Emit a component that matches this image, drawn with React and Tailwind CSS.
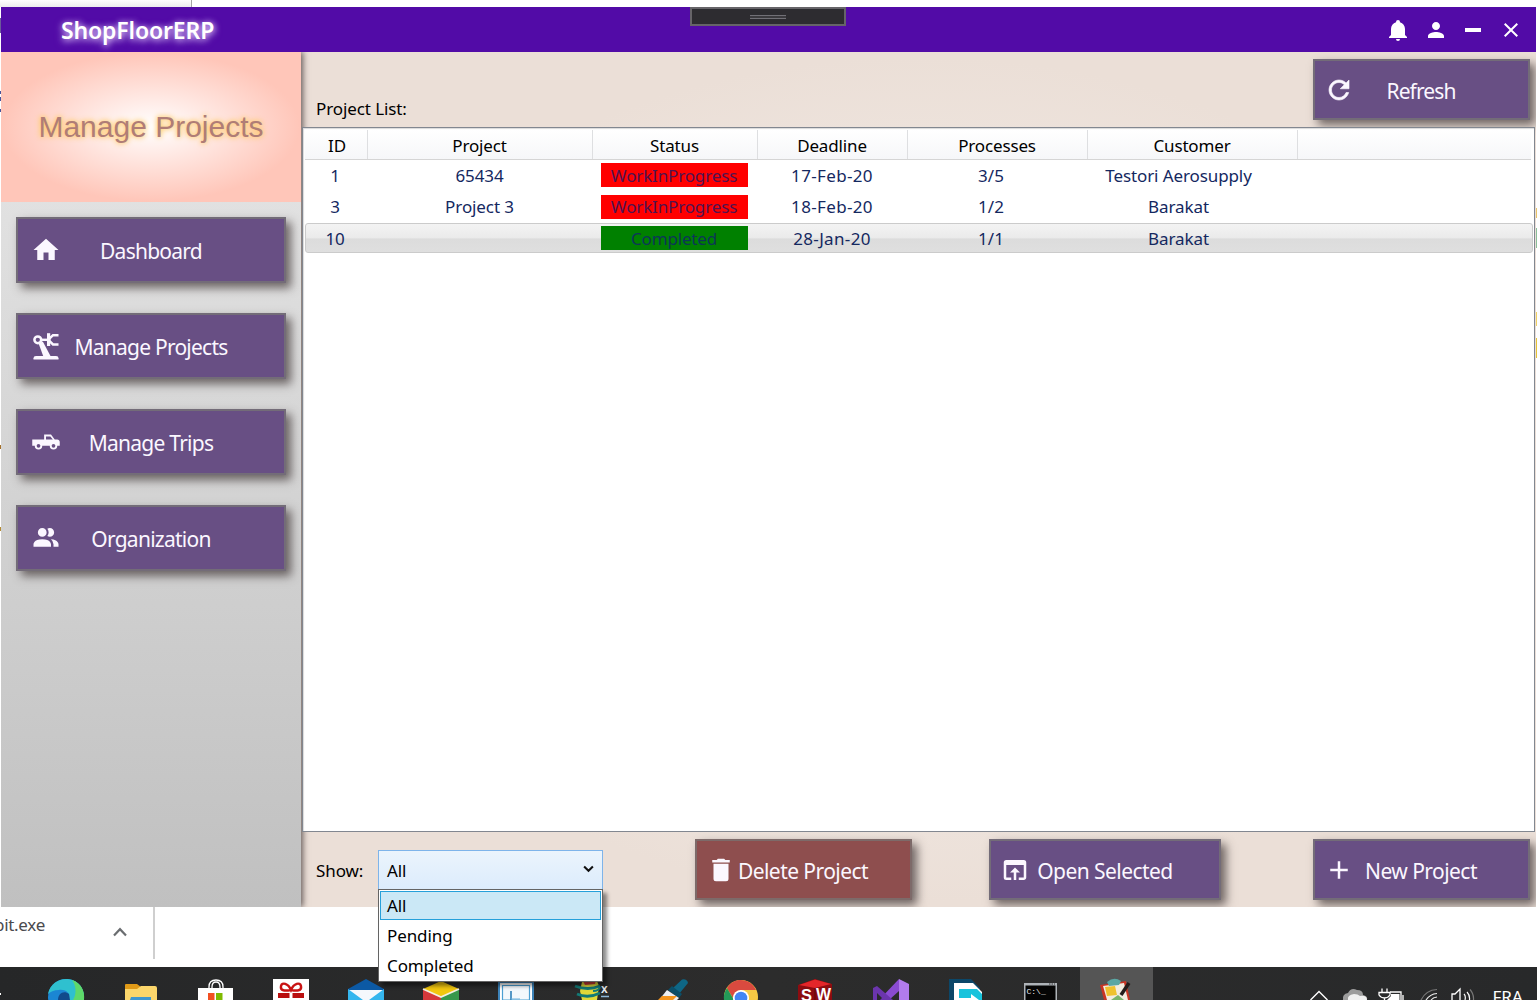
import React from "react";
import { MdPerson, MdClose, MdHome, MdOpenInBrowser, MdAdd } from "react-icons/md";

const UI = "font-['Noto_Sans',sans-serif]";

function Mdi({ d, className }) {
  return (
    <svg viewBox="0 0 24 24" className={className} fill="currentColor" fillRule="evenodd">
      <path d={d} />
    </svg>
  );
}

const BELL =
  "M21,19V20H3V19L5,17V11C5,7.9 7.03,5.17 10,4.29C10,4.19 10,4.1 10,4A2,2 0 0,1 12,2A2,2 0 0,1 14,4C14,4.1 14,4.19 14,4.29C16.97,5.17 19,7.9 19,11V17L21,19M14,21A2,2 0 0,1 12,23A2,2 0 0,1 10,21";
const PICKUP =
  "M16,6H10.5V10H1V15H3A3,3 0 0,0 6,18A3,3 0 0,0 9,15H15A3,3 0 0,0 18,18A3,3 0 0,0 21,15H23V12C23,10.89 22.11,10 21,10H19L16,6M12,7.5H15.5L17.46,10H12V7.5M6,13.5A1.5,1.5 0 0,1 7.5,15A1.5,1.5 0 0,1 6,16.5A1.5,1.5 0 0,1 4.5,15A1.5,1.5 0 0,1 6,13.5M18,13.5A1.5,1.5 0 0,1 19.5,15A1.5,1.5 0 0,1 18,16.5A1.5,1.5 0 0,1 16.5,15A1.5,1.5 0 0,1 18,13.5Z";
const PEOPLE =
  "M16,17V19H2V17S2,13 9,13 16,17 16,17M12.5,7.5A3.5,3.5 0 1,0 9,11A3.5,3.5 0 0,0 12.5,7.5M15.94,13A5.32,5.32 0 0,1 18,17V19H22V17S22,13.37 15.94,13M15,4A3.39,3.39 0 0,0 13.07,4.59A5,5 0 0,1 13.07,10.41A3.39,3.39 0 0,0 15,11A3.5,3.5 0 0,0 15,4Z";
const TRASH =
  "M19,4H15.5L14.5,3H9.5L8.5,4H5V6H19M6,19A2,2 0 0,0 8,21H16A2,2 0 0,0 18,19V7H6V19Z";

function RefreshIcon() {
  return (
    <svg viewBox="0 0 24 24" className="size-[30px]" fill="currentColor" stroke="currentColor" strokeWidth="0.5">
      <path d="M17.65 6.35C16.2 4.9 14.21 4 12 4c-4.42 0-7.99 3.58-7.99 8s3.57 8 7.99 8c3.73 0 6.84-2.55 7.73-6h-2.08c-.82 2.33-3.04 4-5.65 4-3.31 0-6-2.69-6-6s2.69-6 6-6c1.66 0 3.14.69 4.220 1.780L13 11h7V4l-2.350 2.350z" />
    </svg>
  );
}

function RobotArm() {
  return (
    <svg viewBox="0 0 30 30" className="mb-[3px] size-[30px]" fill="none" stroke="currentColor">
      <circle cx="6.800" cy="9.800" r="3.400" strokeWidth="2.500" />
      <path d="M9.500 9.800H17" strokeWidth="2.400" />
      <path d="M7.500 13.200L11.800 11.500L19.500 26H12.200Z" fill="currentColor" stroke="none" />
      <path d="M2.500 29.600V28.200Q2.500 26 5 26H25Q27.500 26 27.500 28.200V29.600Z" fill="currentColor" stroke="none" />
      <path d="M27.500 5.200H22L18.400 8.600V11L22 14.400H27.500" strokeWidth="2.500" />
      <path d="M17.600 3.200V16" strokeWidth="3.200" />
    </svg>
  );
}

function Button({ icon, label, className, iconClass, labelClass }) {
  return (
    <button
      className={`flex items-center border-2 text-left text-[21px] text-[#fbf7ff] shadow-[5px_5px_9px_0px_rgba(70,60,60,0.75)] ${className}`}
    >
      <span className={`flex shrink-0 justify-center ${iconClass}`}>{icon}</span>
      <span className={`whitespace-nowrap ${labelClass}`}>{label}</span>
    </button>
  );
}

const PURPLE = "bg-[#684f84] border-[#736c78]";

const nav = [
  { label: "Dashboard", icon: <MdHome className="size-[30px]" /> },
  { label: "Manage Projects", icon: <RobotArm /> },
  { label: "Manage Trips", icon: <Mdi d={PICKUP} className="size-[30px]" /> },
  { label: "Organization", icon: <Mdi d={PEOPLE} className="size-[30px]" /> },
];

const rows = [
  ["1", "65434", "WorkInProgress", "17-Feb-20", "3/5", "Testori Aerosupply"],
  ["3", "Project 3", "WorkInProgress", "18-Feb-20", "1/2", "Barakat"],
  ["10", "", "Completed", "28-Jan-20", "1/1", "Barakat"],
];

const ROW_STYLE = [
  "h-[30px] border border-transparent",
  "h-[33px] border border-transparent",
  "h-[30px] rounded-[3px] border border-[#cbcbcb] bg-[linear-gradient(#f3f3f3,#ebebeb_48%,#dcdcdc_54%,#dfdfdf)]",
];

function ProjectTable() {
  return (
    <div className="h-[705px] w-[1233px] border border-[#828790] bg-white pl-[2px] pt-[2px] shadow-[inset_1px_1px_1px_rgba(0,0,0,0.15)]">
      <div className="mr-[3px] grid h-[30px] grid-cols-[63px_225px_165px_150px_180px_210px_1fr] border-b border-[#d5d5d5] bg-linear-to-b from-white to-[#f6f7f9] text-[17px] tracking-[-0.15px] text-black">
        {["ID", "Project", "Status", "Deadline", "Processes", "Customer"].map((h, i) => (
          <div
            key={h}
            className={`flex items-center justify-center border-r border-[#dedfe1] pt-[2px] ${i === 0 ? "pl-[2px]" : "pr-px"}`}
          >
            {h}
          </div>
        ))}
      </div>
      <div className="text-[17px] tracking-[-0.1px] text-[#14285f]">
        {rows.map((r, i) => (
          <div
            key={i}
            className={`mr-[1px] grid grid-cols-[61px_225px_165px_150px_180px_210px_1fr] items-center ${ROW_STYLE[i]}`}
          >
            <div className="pr-[3px] pt-px text-center">{r[0]}</div>
            <div className="pt-px text-center">{r[1]}</div>
            <div className="flex justify-center pr-px">
              <span
                className={`flex h-6 w-[147px] items-center justify-center pt-px tracking-[-0.15px] ${
                  r[2] === "Completed" ? "bg-[#008000] text-[#0d3558]" : "bg-[#ff0000] text-[#501450]"
                }`}
              >
                {r[2]}
              </span>
            </div>
            <div className="pt-px text-center tracking-[0.35px]">{r[3]}</div>
            <div className="pr-[12px] pt-px text-center tracking-normal">{r[4]}</div>
            <div className="pr-[27px] pt-px text-center">{r[5]}</div>
          </div>
        ))}
      </div>
    </div>
  );
}

function Combo() {
  return (
    <div className="relative ml-[15px] h-[40px] w-[225px] text-[17px] tracking-[-0.1px] text-black">
      <div className="flex h-full items-center justify-between border border-[#7eb4ea] bg-linear-to-b from-[#ebf4fc] to-[#dcecfc] pl-2 pr-2">
        <span className="pt-px">All</span>
        <svg viewBox="0 0 12 8" className="mb-[2px] h-[8px] w-[11px]" fill="none" stroke="#111" strokeWidth="2.200">
          <path d="M1.200 1.200L6 6L10.800 1.200" />
        </svg>
      </div>
      <div className="absolute left-0 top-[39px] z-10 h-[93px] w-[225px] border border-[#646464] bg-white pt-px shadow-[4px_4px_4px_rgba(0,0,0,0.45)]">
        <div className="mx-px flex h-[29px] items-center border border-[#26a0da] bg-[#cbe8f6] pl-[6px]">All</div>
        <div className="mt-px flex h-[30px] items-center pl-2">Pending</div>
        <div className="flex h-[30px] items-center pl-2">Completed</div>
      </div>
    </div>
  );
}

const taskIcons = [
  <g key="edge">
    <circle cx="38" cy="30" r="18" fill="#1b86d3" />
    <path d="M20 27C22 16 32 11 40 12C51 13 57 22 56 33H40C44 27 38 22 31 23C26 23 22 25 20 27Z" fill="#2fc0cf" />
    <path d="M44 13C53 16 57 24 56 33H45C49 27 48 18 44 13Z" fill="#5fd96a" />
    <path d="M30 33C30 26 36 23 41 27L42 33Z" fill="#114a8b" />
  </g>,
  <g key="folder">
    <path d="M22 18Q22 17 23 17H34L38 20H53V33H22Z" fill="#e09a17" />
    <path d="M22 22H34L38 19H52Q54 19 54 21V33H22Z" fill="#fbd66b" />
    <path d="M28 30H48V33H27Z" fill="#3f97d0" />
  </g>,
  <g key="store">
    <path d="M31 22V20Q31 13 38 13Q45 13 45 20V22M34 22V20Q34 15 38 15Q42 15 42 20V22" fill="none" stroke="#fff" strokeWidth="1.300" />
    <path d="M20 21H55V33H20Z" fill="#fff" />
    <path d="M30 26H36.500V33H30Z" fill="#f25022" />
    <path d="M38 26H44.500V33H38Z" fill="#7fba00" />
  </g>,
  <g key="gift">
    <path d="M20 12H56V33H20Z" fill="#fff" />
    <path d="M38 23C32 24 27 24 28 19C29 15 35 16 38 23C41 16 47 15 48 19C49 24 44 24 38 23Z" fill="none" stroke="#c81414" strokeWidth="2.400" />
    <path d="M25 26H36.500V31H25ZM39.500 26H51V31H39.500Z" fill="#b90f0f" />
  </g>,
  <g key="mail">
    <path d="M20 22L38 12L56 22V33H20Z" fill="#0c59a4" />
    <path d="M20 23H56L38 38Z" fill="#f5f8fc" />
    <path d="M20 22L35 33H20ZM56 22L41 33H56Z" fill="#35b6ee" />
  </g>,
  <g key="cube">
    <path d="M20 22L38 14L56 22L38 30Z" fill="#f2c70f" />
    <path d="M20 22L38 30V33H20Z" fill="#d5383b" />
    <path d="M56 22L38 30V33H56Z" fill="#38984c" />
    <path d="M20 22L38 30L56 22" fill="none" stroke="#f3f0e4" strokeWidth="1.800" />
  </g>,
  <g key="ledger">
    <path d="M20 14H56V33H20Z" fill="#3d83b9" />
    <path d="M22 16H54V33H22Z" fill="#fff" />
    <path d="M24.500 18.500H51.500V33H24.500Z" fill="#f3f8fc" stroke="#4b9fd2" strokeWidth="1.200" />
    <path d="M33 24V33" fill="none" stroke="#2278b5" strokeWidth="1.500" />
    <path d="M33 32H42" fill="none" stroke="#6fb2dc" strokeWidth="1" />
  </g>,
  <g key="spring">
    <path d="M29 15L44 14L46 19L44 33H29L27 24Z" fill="#e1d838" />
    <path d="M30 14L43 13L42 17L32 18Z" fill="#c93b37" />
    <path d="M22 19Q35 24 47 19M24 27Q35 32 47 26" fill="none" stroke="#127a76" strokeWidth="2.800" />
    <path d="M47 20Q46 24 40 24" fill="none" stroke="#127a76" strokeWidth="2" />
  </g>,
  <g key="dropper">
    <path d="M45 21L54 12.500Q59 11.500 60 16L51 27Z" fill="#0e6685" />
    <path d="M44 19L54 27L51 31L40 23Z" fill="#0b4e68" />
    <path d="M39 23L51 31L49 33H31Z" fill="#eceff2" />
    <path d="M34 29H49L45 33H30Z" fill="#f4951e" />
  </g>,
  <g key="chrome">
    <circle cx="38" cy="30" r="17" fill="#f7c844" />
    <path d="M24 21C31 9 48 11 53 23H38Q31 24 30 31Z" fill="#d94a3f" />
    <path d="M24 21L31 33H21Q20 27 24 21Z" fill="#239a58" />
    <circle cx="38" cy="31" r="8" fill="#fff" />
    <circle cx="38" cy="31" r="6.300" fill="#4285f4" />
  </g>,
  <g key="sw">
    <path d="M20 18L37 12L54 17V33H20Z" fill="#8c0c10" />
    <path d="M21 18L37 12.500L53 17L37 21Z" fill="#e4262a" />
    <path d="M37 21V33" stroke="#5b0809" strokeWidth="1" />
    <text x="23" y="34" fontSize="17" fontWeight="bold" fill="#fff" fontFamily="Liberation Sans" textLength="11" lengthAdjust="spacingAndGlyphs">S</text>
    <text x="38" y="33" fontSize="17" fontWeight="bold" fill="#fff" fontFamily="Liberation Sans" textLength="15" lengthAdjust="spacingAndGlyphs">W</text>
  </g>,
  <g key="vs">
    <path d="M46 12L56 17V33H46Z" fill="#b27bec" />
    <path d="M46 12V24L36 33H26Z" fill="#8a4bd2" />
    <path d="M20 21L24 19L40 33H20Z" fill="#6b35ad" />
    <path d="M24 26L29 31L27 33H24Z" fill="#2a2a2c" />
  </g>,
  <g key="dee">
    <path d="M21 12H43L52 21V33H21Z" fill="#0b4769" />
    <path d="M26 16H45L54 25V33H26Z" fill="#fff" />
    <path d="M31 22H49L54 27V33H51L43 27V31H31Z" fill="#19c3dc" />
  </g>,
  <g key="cmd">
    <path d="M21 16H54V33H21Z" fill="#aeb3b8" />
    <path d="M22.500 18.500H52.500V33H22.500Z" fill="#050505" />
    <path d="M46 17H52" stroke="#333" strokeWidth="1" strokeDasharray="1.500 1" />
    <text x="23.500" y="27" fontSize="8" fill="#eee" fontFamily="Liberation Mono">C:\_</text>
  </g>,
  <g key="clip">
    <path d="M2 0H75V33H2Z" fill="#555555" />
    <path d="M22 18L48 14L52 33H26Z" fill="#c93423" />
    <path d="M25 19L46 16L50 33H29Z" fill="#f3ece0" />
    <path d="M27 20L37 19L39 28L29 29Z" fill="#f0c22e" />
    <path d="M29 15Q36 9 43 14L41 18L31 19Z" fill="#5ba7a4" />
    <path d="M51 16L43 28" stroke="#241c1a" strokeWidth="3.500" />
    <path d="M33 33L40 28L46 33Z" fill="#7ab46c" />
  </g>,
];

function Taskbar() {
  return (
    <div className="relative z-[15] flex h-[33px] items-stretch overflow-hidden bg-linear-to-r from-[#262728] via-[#2c2c2c] to-[#28292a]">
      <div className="w-[28px] shrink-0 pt-[26px]">
        <div className="h-[2px] w-px bg-white" />
      </div>
      {taskIcons.map((g, i) => (
        <svg key={i} viewBox="0 0 75 33" className="h-[33px] w-[75px] shrink-0">
          {g}
          {i === 7 && (
            <text x="48" y="26" fontSize="12" fontWeight="bold" fill="#e8edf2" fontFamily="Liberation Sans">
              x
            </text>
          )}
          {i === 7 && <path d="M48 29.500H56" stroke="#8fb7d8" strokeWidth="1.500" />}
        </svg>
      ))}
      <svg viewBox="0 0 237 33" className="ml-auto h-[33px] w-[237px] shrink-0" fill="none">
        <path d="M10.500 33L19 24.500L27.500 33" stroke="#fff" strokeWidth="1.400" />
        <path d="M43 33Q42 27 48 26Q51 20 57 23Q63 23 63 28Q68 29 67 33Z" fill="#9c9c9c" />
        <path d="M48 33Q47 28 54 27Q58 27 60 29Q67 28 67 33Z" fill="#f0f0f0" />
        <path d="M82 21.500V25M87 21.500V25M79 25.500H90V28Q88 31 84.500 31Q81 31 79 28ZM84.500 31V33" stroke="#fff" strokeWidth="1.300" />
        <path d="M90 25H101V33M103 28V33" stroke="#fff" strokeWidth="1.300" />
        <path d="M91 27H99.500V33H87L91 29Z" fill="#fff" />
        <path d="M121 33Q126 23 137 22.500" stroke="#777" strokeWidth="1.200" />
        <path d="M126 33Q130 27 137 26.500M131 33Q133 30.500 137 30" stroke="#eee" strokeWidth="1.200" />
        <path d="M160 33V22L155 27H152V33" stroke="#fff" strokeWidth="1.300" />
        <path d="M164 27Q166 29 165 33M167 25Q170 28 169.500 33" stroke="#fff" strokeWidth="1.200" />
        <path d="M170 22.500Q174 27 173.500 33" stroke="#777" strokeWidth="1.200" />
        <text x="192.500" y="36" fontSize="17" fill="#fff" fontFamily="Noto Sans">FRA</text>
      </svg>
    </div>
  );
}

export default function App() {
  return (
    <div className={`flex h-[1000px] w-[1537px] flex-col overflow-hidden bg-white ${UI}`}>
      <div className="h-[7px] w-[192px] shrink-0 border-r border-[#a5a5a5] bg-linear-to-b from-white to-[#ededed]" />

      <div className="flex h-[900px] shrink-0">
        <div className="relative z-[15] flex w-px shrink-0 flex-col bg-white">
          <div className="mt-[11px] h-[15px] bg-[#6b5a9a]" />
          <div className="mt-[58px] h-[3px] bg-[#48549a]" />
          <div className="mt-[3px] h-[4px] bg-[#48549a]" />
          <div className="mt-[8px] h-[3px] bg-[#48549a]" />
          <div className="mt-[333px] h-[4px] bg-[#a5712c]" />
          <div className="mt-[78px] h-[4px] bg-[#b48c35]" />
        </div>

        <div className="flex w-[1535px] flex-col">
          <header className="relative z-[12] flex h-[45px] shrink-0 items-center justify-between bg-[#520ba7] pl-[60px] pr-[13px] text-white">
            <h1 className="pt-[2px] text-[23px] font-semibold tracking-[-0.15px] [text-shadow:1px_1px_6px_rgba(235,215,255,0.9),0_2px_8px_rgba(225,200,255,0.6)]">
              ShopFloorERP
            </h1>
            <div className="flex items-center gap-[13.6px]">
              <Mdi d={BELL} className="size-6" />
              <MdPerson className="size-6" />
              <Mdi d="M20,14H4V10H20Z" className="size-6" />
              <MdClose className="size-6" />
            </div>
            <div className="absolute left-[689px] top-0 flex h-[19px] w-[156px] items-center justify-center border-2 border-[#666468] bg-[#2d2c30]">
              <div className="h-[4px] w-9 border-y border-[#717076] bg-[#3b3a3e]" />
            </div>
          </header>

          <div className="flex min-h-0 flex-1">
            <aside className="z-10 flex w-[300px] shrink-0 flex-col bg-linear-to-b from-[#e8e8e8] to-[#c0c0c0] shadow-[2px_0_6px_rgba(60,50,50,0.75)]">
              <div className="flex h-[150px] shrink-0 items-center justify-center bg-[radial-gradient(ellipse_at_center,#ffffff_0%,#ffc6b9_70%)]">
                <h2 className="whitespace-nowrap font-['Liberation_Sans',Arial,sans-serif] text-[30px] leading-none text-[#b07d76] [text-shadow:0_0_6px_#ffc65c,0_0_4px_#ffd78c]">
                  Manage Projects
                </h2>
              </div>
              <nav className="flex flex-col gap-[30px] px-[15px] pt-[15px]">
                {nav.map((n) => (
                  <Button
                    key={n.label}
                    icon={n.icon}
                    label={n.label}
                    className={`h-[66px] w-[270px] tracking-[-0.75px] ${PURPLE}`}
                    iconClass="ml-[13px] w-[30px]"
                    labelClass="w-[180px] pt-[4px] text-center"
                  />
                ))}
              </nav>
            </aside>

            <main className="flex min-w-0 flex-1 flex-col bg-[radial-gradient(ellipse_at_center,#f6f1ee_0%,#ebdfd7_70%)]">
              <div className="flex h-[75px] shrink-0 items-start justify-between pl-[15px] pr-[6px] pt-[7px]">
                <div className="mt-[37px] text-[17px] tracking-[-0.1px] text-black">Project List:</div>
                <Button
                  icon={<RefreshIcon />}
                  label="Refresh"
                  className={`h-[61px] w-[217px] tracking-[-0.9px] ${PURPLE}`}
                  iconClass="ml-[9px] w-[30px]"
                  labelClass="w-[134px] pt-[4px] text-center"
                />
              </div>
              <div className="relative z-[11] ml-[1px]">
                <ProjectTable />
              </div>
              <div className="flex h-[75px] items-start pl-[15px] pt-[7px]">
                <div className="mt-[19px] w-[47px] whitespace-nowrap text-[17px] tracking-[-0.1px] text-black">Show:</div>
                <div className="z-20 mt-[11px]">
                  <Combo />
                </div>
                <Button
                  icon={<Mdi d={TRASH} className="size-[30px]" />}
                  label="Delete Project"
                  className="ml-[92px] h-[61px] w-[217px] border-[#7d6a69] bg-[#8e4e4e] tracking-[-0.55px]"
                  iconClass="ml-[9px] w-[30px]"
                  labelClass="w-[134px] pt-[4px] text-center"
                />
                <Button
                  icon={<MdOpenInBrowser className="size-[30px]" />}
                  label="Open Selected"
                  className={`ml-[77px] h-[61px] w-[232px] tracking-[-0.55px] ${PURPLE}`}
                  iconClass="ml-[9px] w-[30px]"
                  labelClass="w-[150px] pt-[4px] text-center"
                />
                <Button
                  icon={<MdAdd className="size-[30px]" />}
                  label="New Project"
                  className={`ml-[92px] h-[61px] w-[217px] tracking-[-0.55px] ${PURPLE}`}
                  iconClass="ml-[9px] w-[30px]"
                  labelClass="w-[134px] pt-[4px] text-center"
                />
              </div>
            </main>
          </div>
        </div>
        <div className="relative z-[15] flex w-px shrink-0 flex-col bg-white">
          <div className="mt-[201px] h-[10px] bg-[#e8c46a]" />
          <div className="mt-[10px] h-[20px] bg-[#8bbf9a]" />
          <div className="mt-[64px] h-[14px] bg-[#f0d264]" />
          <div className="mt-[12px] h-[20px] bg-[#e6c437]" />
        </div>
      </div>

      <div className="relative z-[15] flex h-[60px] shrink-0 items-start bg-white">
        <div className="flex h-[52px] w-[155px] justify-between border-r-2 border-[#cfcfcf] pr-[26px]">
          <span className="-ml-[6px] mt-[5px] text-[17px] tracking-[-0.3px] text-[#4a4a4e]">bit.exe</span>
          <svg viewBox="0 0 14 10" className="mt-[20px] h-[10px] w-[14px]" fill="none" stroke="#6a6d70" strokeWidth="2.200">
            <path d="M1 8.500L7 2.200L13 8.500" />
          </svg>
        </div>
      </div>

      <Taskbar />
    </div>
  );
}
